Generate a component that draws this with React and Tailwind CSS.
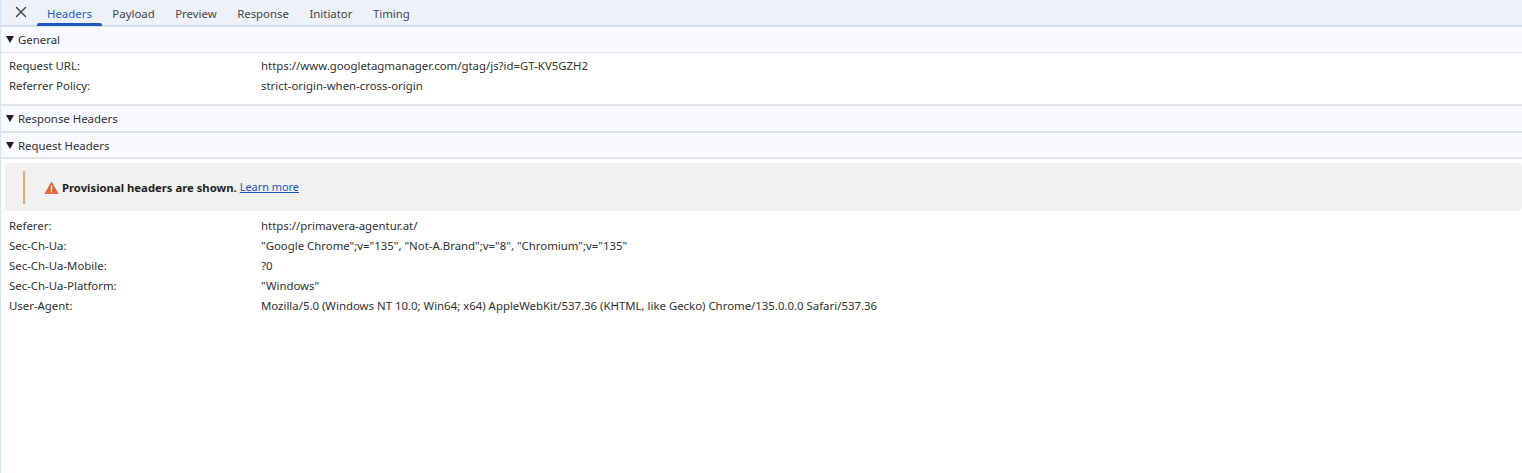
import { X } from "lucide-react";

const TABS = ["Headers", "Payload", "Preview", "Response", "Initiator", "Timing"];

const GENERAL = [
  ["Request URL:", "https://www.googletagmanager.com/gtag/js?id=GT-KV5GZH2"],
  ["Referrer Policy:", "strict-origin-when-cross-origin"],
];

const REQUEST = [
  ["Referer:", "https://primavera-agentur.at/"],
  ["Sec-Ch-Ua:", '"Google Chrome";v="135", "Not-A.Brand";v="8", "Chromium";v="135"'],
  ["Sec-Ch-Ua-Mobile:", "?0"],
  ["Sec-Ch-Ua-Platform:", '"Windows"'],
  [
    "User-Agent:",
    "Mozilla/5.0 (Windows NT 10.0; Win64; x64) AppleWebKit/537.36 (KHTML, like Gecko) Chrome/135.0.0.0 Safari/537.36",
  ],
];

function SectionHeader({ title, className = "h-[27px] border-b border-[#dde3ee]" }) {
  return (
    <div className={`flex items-center bg-[#f8faff] pl-[5px] ${className}`}>
      <svg width="8" height="7" viewBox="0 0 8 7" className="mr-[4px] text-[#1f1f1f]">
        <path d="M0 0h8L4 7z" fill="currentColor" />
      </svg>
      <span className="text-[#303134]">{title}</span>
    </div>
  );
}

function Row({ name, value }) {
  return (
    <div className="flex h-5 items-center pl-[8px]">
      <div className="w-[252px] shrink-0 text-[#303134]">{name}</div>
      <div className="whitespace-nowrap text-[#303134]">{value}</div>
    </div>
  );
}

export default function App() {
  return (
    <div className="h-[473px] w-[1522px] overflow-hidden border-l border-l-[#d6e2fb] bg-white font-['Noto_Sans',sans-serif] text-[11.4px] leading-none">
      {/* Tab bar */}
      <div className="flex h-[27px] items-stretch border-b-2 border-[#d5e1ef] bg-[#edf1f9] pl-[11px]">
        <div className="flex w-[35px] items-center justify-start pb-[1px] text-[#444746]">
          <X size={18} strokeWidth={1.8} />
        </div>
        <div className="flex gap-[20.5px]">
          {TABS.map((t, i) => (
            <div
              key={t}
              className={`relative flex items-center pt-[3px] ${i === 0 ? "text-[#1f5fc4]" : "text-[#474747]"}`}
            >
              {t}
              {i === 0 && (
                <div className="absolute -left-[10px] -right-[10px] -bottom-[1px] h-[3px] rounded-t-[2px] bg-[#1f55bd]" />
              )}
            </div>
          ))}
        </div>
      </div>

      <SectionHeader title="General" className="h-[26px] border-b border-[#dde3ee]" />
      <div className="flex h-[53px] flex-col border-b-2 border-[#e3e5ea] pt-[3px]">
        {GENERAL.map(([n, v]) => (
          <Row key={n} name={n} value={v} />
        ))}
      </div>

      <SectionHeader title="Response Headers" className="h-[27px] border-b-2 border-[#d7e2ee]" />
      <SectionHeader title="Request Headers" className="h-[26px] border-b-2 border-[#e3e5ea] pt-[1px]" />

      {/* Provisional headers warning */}
      <div className="ml-[4px] mt-[4px] flex h-[48px] items-center rounded-[4px] bg-[#f1f1f1] pl-[18px]">
        <div className="mr-[19px] h-[33px] w-[2px] bg-[#efa765]" />
        <svg width="15" height="13" viewBox="0 0 15 13" className="mr-[3px] mt-[1px]">
          <path d="M7.5 0.5 14.7 13H.3z" fill="#e2683c" />
          <path d="M6.8 4.5h1.4v4.4H6.8zM6.8 9.8h1.4v1.4H6.8z" fill="#fff" />
        </svg>
        <span className="mt-[1px] text-[11.3px] font-bold text-[#1f1f1f]">Provisional headers are shown.</span>
        <span className="ml-[3px] mt-[1px] text-[10.9px] text-[#1a56b8] underline">Learn more</span>
      </div>

      <div className="flex flex-col pt-[5px]">
        {REQUEST.map(([n, v]) => (
          <Row key={n} name={n} value={v} />
        ))}
      </div>
    </div>
  );
}
